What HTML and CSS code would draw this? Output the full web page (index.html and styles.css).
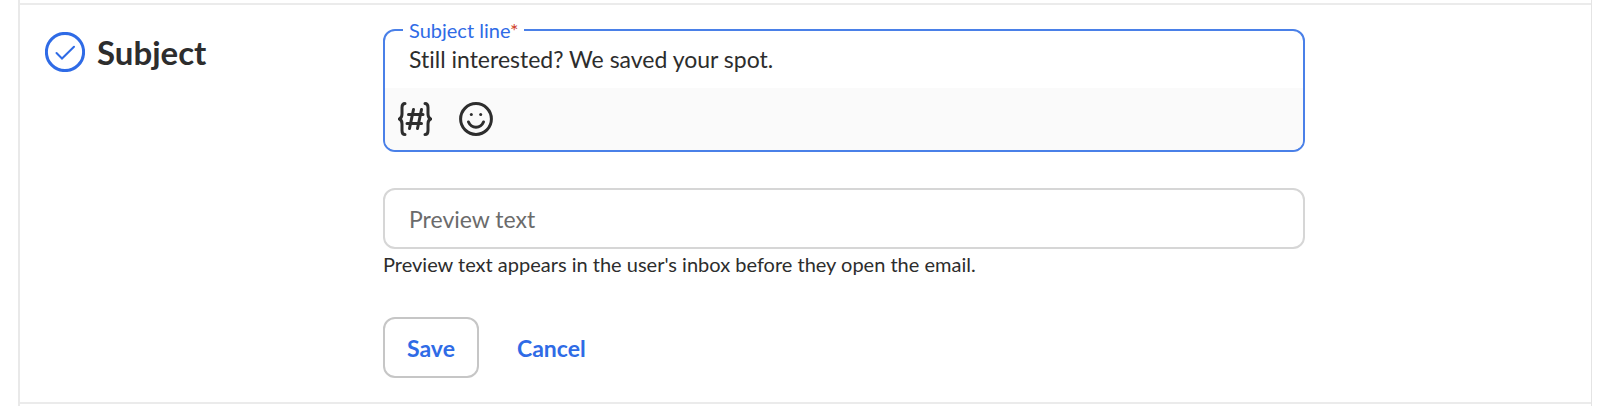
FILE: index.html
```html
<!DOCTYPE html>
<html lang="en">
<head>
  <meta charset="UTF-8" />
  <meta name="viewport" content="width=device-width, initial-scale=1" />
  <title>Subject</title>
  <link rel="stylesheet" href="styles.css">
</head>
<body>

  <main class="campaign">
    <section class="step">
      <div class="step-title">
        <svg class="check-icon" viewBox="0 0 40 40" aria-hidden="true">
          <circle cx="20" cy="20" r="18.6" />
          <path d="M11.5 21l5.5 5.5L29 14.700" />
        </svg>
        <h2>Subject</h2>
      </div>

      <form class="step-form">
        <div class="subject-box">
          <label for="subject">Subject line<span class="required">*</span></label>
          <input type="text" id="subject" value="Still interested? We saved your spot." required>
          <div class="toolbar">
            <button type="button" class="tool" aria-label="Insert variable">
              <svg viewBox="0 0 34 34" aria-hidden="true">
                <path d="M7 1.500C4.500 1.500 4 3.500 4 5.500V12c0 3-.8 4.300-2.600 5C3.200 17.700 4 19 4 22v6.500c0 2 .5 4 3 4" />
                <path d="M27 1.500c2.500 0 3 2 3 4V12c0 3 .8 4.300 2.600 5-1.800.7-2.600 2-2.600 5v6.500c0 2-.5 4-3 4" />
                <path d="M15.500 7.500l-4 19M23.500 7.500l-4 19M10.500 12.500h14.500M9 21.500h14.500" />
              </svg>
            </button>
            <button type="button" class="tool" aria-label="Insert emoji">
              <svg viewBox="0 0 34 34" aria-hidden="true">
                <circle cx="17" cy="17" r="15.400" />
                <path d="M9.500 20c3 7 12 7 15 0" />
                <circle class="eye" cx="12.300" cy="12.500" r="1.500" />
                <circle class="eye" cx="21.700" cy="12.500" r="1.500" />
              </svg>
            </button>
          </div>
        </div>

        <input type="text" class="preview" placeholder="Preview text" aria-label="Preview text" aria-describedby="preview-hint">
        <p class="hint" id="preview-hint">Preview text appears in the user's inbox before they open the email.</p>

        <div class="actions">
          <button type="submit" class="btn save">Save</button>
          <button type="button" class="btn">Cancel</button>
        </div>
      </form>
    </section>
  </main>

</body>
</html>
```
FILE: styles.css
```css
* {
  box-sizing: border-box;
}

body {
  margin: 0;
  padding: 0 8px 0 18px;
  background: #fff;
  color: #2d2d2d;
  font-family: Lato, sans-serif;
  font-variant-ligatures: none;
}

.campaign {
  min-height: 100vh;
  padding-top: 3px;
  border-left: 2px solid #e9e9e9;
  border-right: 1px solid #e4e4e4;
}

.step {
  display: grid;
  grid-template-columns: 338px minmax(0, 922px);
  padding: 24px 25px;
  border-top: 2px solid #ebebeb;
  border-bottom: 2px solid #ebebeb;
}

.step-title {
  display: flex;
  align-items: center;
  align-self: start;
  gap: 12px;
  padding-top: 3px;
}

.check-icon {
  width: 40px;
  height: 40px;
  fill: none;
  stroke: #2f6be6;
  stroke-width: 3;
}

.check-icon path {
  stroke-width: 2;
  stroke-linecap: round;
}

h2 {
  margin: 0;
  font-size: 33px;
  line-height: 38px;
}

.subject-box {
  position: relative;
  border: 2px solid #4a80e8;
  border-radius: 12px;
}

/* label sits over the top border */
.subject-box label {
  position: absolute;
  top: -13px;
  left: 18px;
  padding: 0 6px;
  background: #fff;
  color: #2f6be6;
  font-size: 20px;
  line-height: 24px;
}

.required {
  color: #d0402b;
}

input {
  display: block;
  width: 100%;
  padding: 0 24px;
  border: 0;
  outline: 0;
  background: none;
  color: inherit;
  font: inherit;
  font-size: 23px;
}

#subject {
  height: 57px;
  padding-bottom: 2px;
}

.toolbar {
  display: flex;
  gap: 27px;
  padding: 14px 13px;
  border-radius: 0 0 10px 10px;
  background: #fafafa;
}

.tool {
  padding: 0;
  border: 0;
  background: none;
  cursor: pointer;
}

.tool svg {
  display: block;
  width: 34px;
  height: 34px;
  fill: none;
  stroke: #2d2d2d;
  stroke-width: 3;
  stroke-linecap: round;
}

.tool .eye {
  fill: #2d2d2d;
  stroke: none;
}

.preview {
  height: 61px;
  margin-top: 36px;
  border: 2px solid #d6d6d6;
  border-radius: 12px;
}

.preview::placeholder {
  color: #6b6b6b;
  opacity: 1;
}

.hint {
  margin: 3px 0 41px;
  font-size: 20px;
  line-height: 24px;
}

.actions {
  display: flex;
  gap: 14px;
}

.btn {
  height: 61px;
  padding: 0 22px;
  border: 2px solid transparent;
  border-radius: 12px;
  background: none;
  color: #2f6be6;
  font: inherit;
  font-size: 23px;
  font-weight: bold;
  cursor: pointer;
}

.save {
  border-color: #c6c6c6;
}
```
